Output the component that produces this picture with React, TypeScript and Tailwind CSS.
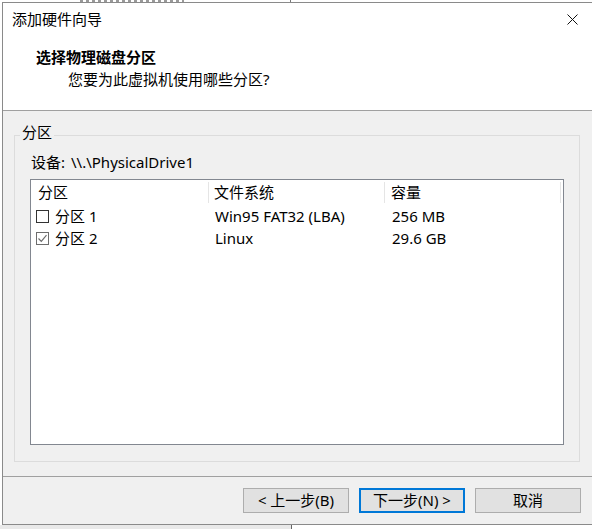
import React from "react";

const font = { fontFamily: '"Noto Sans", "Noto Sans CJK SC", sans-serif' };

const Check = ({ checked }: { checked: boolean }) => (
  <span
    className={
      "flex h-[13px] w-[13px] items-center justify-center border " +
      (checked ? "border-[#6d6d6d]" : "border-[#333333]")
    }
  >
    {checked && (
      <svg width="11" height="11" viewBox="0 0 11 11">
        <path d="M1.5 5.5 L4.3 8.3 L9.5 2.2" fill="none" stroke="#6d6d6d" strokeWidth="1.2" />
      </svg>
    )}
  </span>
);

const rows = [
  { name: "分区 1", fs: "Win95 FAT32 (LBA)", size: "256 MB", checked: false },
  { name: "分区 2", fs: "Linux", size: "29.6 GB", checked: true },
];

const App = () => {
  return (
    <div className="flex h-[529px] w-[592px] flex-col overflow-hidden bg-white text-[15px] text-black" style={font}>
      {/* strip of desktop above the dialog */}
      <div className="flex h-[2px] shrink-0">
        <div className="ml-[80px] h-[2px] w-[104px] bg-[repeating-linear-gradient(90deg,#555_0px,#555_3px,transparent_3px,transparent_6px)] opacity-60" />
        <div className="ml-[106px] h-[2px] w-[1px] bg-[#777]" />
      </div>

      <div className="ml-[2px] flex flex-1 flex-col border-b border-l border-t border-[#8a8a8a]">
        {/* title + header */}
        <div className="flex h-[107px] shrink-0 flex-col bg-white">
          <div className="flex items-center justify-between pt-[6px]">
            <span className="ml-[9px] leading-[20px]">添加硬件向导</span>
            <svg className="mr-[14px]" width="11" height="11" viewBox="0 0 11 11">
              <path d="M0.5 0.5 L10.5 10.5 M10.5 0.5 L0.5 10.5" stroke="#111" strokeWidth="1" />
            </svg>
          </div>
          <div className="ml-[33px] mt-[18px] font-bold leading-[20px]">选择物理磁盘分区</div>
          <div className="ml-[65px] mt-[2px] leading-[20px]">您要为此虚拟机使用哪些分区?</div>
        </div>

        <div className="h-[1px] shrink-0 bg-[#a0a0a0]" />

        {/* body */}
        <div className="flex h-[365px] shrink-0 flex-col bg-[#f0f0f0] pl-[11px] pr-[12px] pt-[24px]">
          <div className="relative flex h-[327px] flex-col border border-[#dcdcdc]">
            <span className="absolute -top-[14px] left-[5px] bg-[#f0f0f0] px-[2px] leading-[20px]">分区</span>
            <div className="ml-[16px] mt-[16px] flex leading-[20px]">
              <span>设备:</span>
              <span className="ml-[6px]">\\.\PhysicalDrive1</span>
            </div>
            <div className="ml-[15px] mt-[7px] flex h-[266px] w-[534px] flex-col border border-[#828790] bg-white">
              <div className="flex h-[25px] items-center">
                <div className="flex h-[21px] w-[178px] items-center border-r border-[#e5e5e5] pl-[7px]">分区</div>
                <div className="flex h-[21px] w-[176px] items-center border-r border-[#e5e5e5] pl-[5px]">文件系统</div>
                <div className="flex h-[21px] w-[176px] items-center border-r border-[#e5e5e5] pl-[6px]">容量</div>
              </div>
              {rows.map((r) => (
                <div key={r.name} className="flex h-[22px] items-center">
                  <div className="flex w-[178px] items-center pl-[5px]">
                    <Check checked={r.checked} />
                    <span className="ml-[6px]">{r.name}</span>
                  </div>
                  <div className="w-[176px] pl-[6px]">{r.fs}</div>
                  <div className="w-[176px] pl-[7px]">{r.size}</div>
                </div>
              ))}
            </div>
          </div>
        </div>

        <div className="h-[1px] shrink-0 bg-[#a0a0a0]" />

        {/* buttons */}
        <div className="flex flex-1 justify-end gap-[10px] bg-[#f0f0f0] pr-[11px] pt-[11px]">
          <button className="flex h-[25px] w-[106px] items-center justify-center border border-[#adadad] bg-[#e1e1e1]">
            &lt; 上一步(B)
          </button>
          <button className="flex h-[25px] w-[106px] items-center justify-center border-2 border-[#0078d7] bg-[#e1e1e1]">
            下一步(N) &gt;
          </button>
          <button className="flex h-[25px] w-[106px] items-center justify-center border border-[#adadad] bg-[#e1e1e1]">
            取消
          </button>
        </div>
      </div>

      {/* desktop strip below */}
      <div className="flex h-[4px] shrink-0">
        <div className="h-[4px] w-[291px] bg-[#e9e9e9]" />
        <div className="h-[4px] w-[1px] bg-[#666]" />
        <div className="h-[4px] flex-1 bg-white" />
      </div>
    </div>
  );
};

export default App;
